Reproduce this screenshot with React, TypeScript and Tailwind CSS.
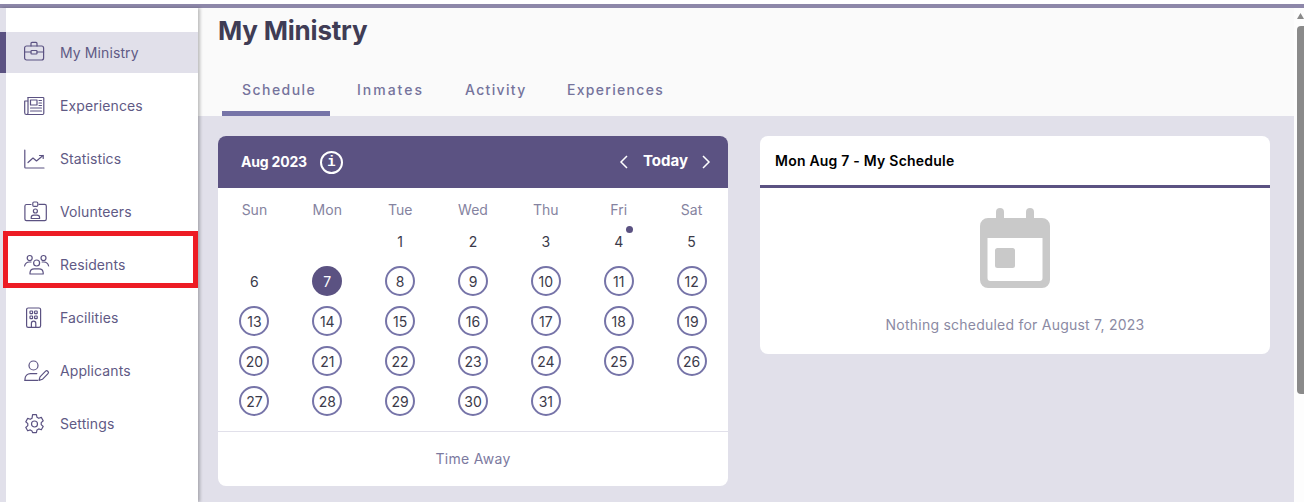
import type { ReactNode } from 'react';

const FONT = "font-['Inter','Liberation_Sans',sans-serif]";

function Icon({ children }: { children: ReactNode }) {
  return (
    <svg
      width="28"
      height="24"
      viewBox="0 0 28 24"
      fill="none"
      stroke="#5b5282"
      strokeWidth="1.2"
      strokeLinecap="round"
      strokeLinejoin="round"
    >
      {children}
    </svg>
  );
}

const navItems: { label: string; active?: boolean; icon: ReactNode }[] = [
  {
    label: 'My Ministry',
    active: true,
    icon: (
      <>
        <rect x="0.6" y="5" width="19" height="14" rx="2" />
        <path d="M7 5V2.400a1 1 0 0 1 1-1h4a1 1 0 0 1 1 1V5" />
        <path d="M0.600 11h6.400M13 11h6.600" />
        <rect x="7" y="9.500" width="6" height="3.500" rx="0.800" />
      </>
    ),
  },
  {
    label: 'Experiences',
    icon: (
      <>
        <path d="M4 3.500h15a.8.8 0 0 1 .8.8v15a1.200 1.200 0 0 1-1.200 1.200H2.500a1.800 1.800 0 0 1-1.800-1.800V7h3" />
        <path d="M4 3.500v15.500a1.500 1.500 0 0 1-1.500 1.500" />
        <rect x="6.500" y="6" width="6.500" height="5" />
        <path d="M15 6.500h2.500M15 9h2.500M15 11.500h2.500M6.500 14h11M6.500 17h11" />
      </>
    ),
  },
  {
    label: 'Statistics',
    icon: (
      <>
        <path d="M0.800 3v17.200a.8.8 0 0 0 .8.8H20" />
        <path d="M4 15.500l5-4.500 3.500 3 6.500-5.500" />
        <path d="M15.500 8.500h3.700v3" />
      </>
    ),
  },
  {
    label: 'Volunteers',
    icon: (
      <>
        <path d="M7 4.500H2.500A1.600 1.600 0 0 0 .9 6v13a1.600 1.600 0 0 0 1.600 1.600h18.200a1.600 1.600 0 0 0 1.600-1.600V6a1.600 1.600 0 0 0-1.600-1.600H15" />
        <rect x="8.800" y="2" width="5" height="4.400" rx="1.200" />
        <circle cx="11.400" cy="11" r="2" />
        <path d="M7.200 18.500v-.8a2.600 2.600 0 0 1 2.600-2.600h3.200a2.600 2.600 0 0 1 2.600 2.600v.8z" />
      </>
    ),
  },
  {
    label: 'Residents',
    icon: (
      <>
        <circle cx="5.700" cy="5" r="2.500" />
        <circle cx="19.500" cy="5" r="2.500" />
        <circle cx="12.600" cy="10" r="3" />
        <path d="M.6 13a5 5 0 0 1 4.800-4h1.600" />
        <path d="M24.600 13a5 5 0 0 0-4.800-4h-1.600" />
        <path d="M6 21v-1.300a4.200 4.200 0 0 1 4.200-3.900h4.800a4.200 4.200 0 0 1 4.200 3.900V21z" />
      </>
    ),
  },
  {
    label: 'Facilities',
    icon: (
      <>
        <rect x="2.600" y="2" width="14" height="19.400" rx="1.600" />
        <rect x="6" y="5" width="2.600" height="2.600" rx="0.600" />
        <rect x="10.600" y="5" width="2.600" height="2.600" rx="0.600" />
        <rect x="6" y="10" width="2.600" height="2.600" rx="0.600" />
        <rect x="10.600" y="10" width="2.600" height="2.600" rx="0.600" />
        <path d="M7.400 21.400v-4a2.200 2.200 0 0 1 4.400 0v4" />
      </>
    ),
  },
  {
    label: 'Applicants',
    icon: (
      <>
        <circle cx="9.500" cy="6.500" r="4.500" />
        <path d="M1 21.400v-1.400a5.400 5.400 0 0 1 5.400-5.400h6.400" />
        <path d="M1 21.400h12.600" />
        <path d="M15 21.400l1-3.600 5.600-5.600a1.500 1.500 0 0 1 2.100 0l.3.300a1.500 1.500 0 0 1 0 2.100l-5.600 5.700z" />
      </>
    ),
  },
  {
    label: 'Settings',
    icon: (
      <>
        <circle cx="10.500" cy="12" r="3" />
        <path d="M8.600 2.600h3.800l.6 2.700 1.700 1 2.600-.9 1.900 3.300-2 1.900v2l2 1.900-1.900 3.300-2.600-.9-1.700 1-.6 2.700H8.600L8 18.900l-1.700-1-2.600.9-1.900-3.300 2-1.900v-2l-2-1.900 1.900-3.300 2.600.9 1.700-1z" />
      </>
    ),
  },
];

const tabs = [
  { label: 'Schedule', box: 'mr-[7px] w-[108px] border-[#7674a8] tracking-[1.45px]' },
  { label: 'Inmates', box: 'w-[108px] border-transparent tracking-[2px]' },
  { label: 'Activity', box: 'w-[102px] border-transparent tracking-[1.35px]' },
  { label: 'Experiences', box: 'w-[120px] border-transparent tracking-[1.3px]' },
];
const weekdays = ['Sun', 'Mon', 'Tue', 'Wed', 'Thu', 'Fri', 'Sat'];

function Sidebar() {
  return (
    <aside className="relative z-10 w-[198px] shrink-0 border-l-[6px] border-[#e1e0ea] bg-white pt-[18px] shadow-[2px_0_3px_rgba(0,0,0,0.25)]">
      {navItems.map((item) => (
        <div key={item.label} className="flex h-[53px] items-center">
          <div
            className={
              item.active
                ? '-ml-[6px] flex h-[41px] w-[198px] items-center border-l-[6px] border-[#5b5282] bg-[#e1e0ea] pl-[18px]'
                : 'flex h-[41px] w-[192px] items-center pl-[18px]'
            }
          >
            <span className="flex w-[36px] shrink-0">
              <Icon>{item.icon}</Icon>
            </span>
            <span className="text-[14px] tracking-[0.1px] text-[#5f5a85]">{item.label}</span>
          </div>
        </div>
      ))}
    </aside>
  );
}

function DayCell({ day }: { day?: number }) {
  if (!day) return <div />;
  const selected = day === 7;
  const plain = day < 7;
  return (
    <div className="relative flex h-[40px] items-center justify-center">
      <span
        className={
          selected
            ? 'flex h-[30px] w-[30px] items-center justify-center rounded-full bg-[#5b5282] text-[14px] text-white'
            : plain
              ? 'flex h-[30px] w-[30px] items-center justify-center rounded-full text-[14px] text-[#3b3a4a]'
              : 'flex h-[30px] w-[30px] items-center justify-center rounded-full border-2 border-[#7674a8] text-[14px] text-[#3b3a4a]'
        }
      >
        {day}
      </span>
      {day === 4 && (
        <span className="absolute left-[44px] top-[5px] h-[7px] w-[7px] rounded-full bg-[#5b5282]" />
      )}
    </div>
  );
}

function Calendar() {
  const cells: (number | undefined)[] = [undefined, undefined];
  for (let d = 1; d <= 31; d++) cells.push(d);

  return (
    <section className="h-[350px] w-[510px] shrink-0 overflow-hidden rounded-lg bg-white">
      <div className="flex h-[52px] items-center bg-[#5b5282] pl-[23px] pr-[17px] text-white">
        <span className="pb-[2px] text-[14px] font-bold tracking-[-0.2px]">Aug 2023</span>
        <span className="ml-[13px] flex h-[23px] w-[23px] items-center justify-center rounded-full border-2 border-white font-['Liberation_Mono',monospace] text-[14px] font-bold">
          i
        </span>
        {/* hand drawn so the chevrons keep the reference's thin tall shape */}
        <svg className="ml-auto" width="10" height="14" viewBox="0 0 10 14" fill="none" stroke="white" strokeWidth="1.5">
          <path d="M8 1L2 7l6 6" />
        </svg>
        <span className="ml-[14px] mr-[13px] pb-[2px] text-[15px] font-bold">Today</span>
        <svg width="10" height="14" viewBox="0 0 10 14" fill="none" stroke="white" strokeWidth="1.5">
          <path d="M2 1l6 6-6 6" />
        </svg>
      </div>
      <div className="grid grid-cols-7 pt-[11px]">
        {weekdays.map((w) => (
          <div key={w} className="flex h-[20px] items-center justify-center text-[14px] text-[#8583a0]">
            {w}
          </div>
        ))}
      </div>
      <div className="grid grid-cols-7 pt-[2px]">
        {cells.map((day, i) => (
          <DayCell key={i} day={day} />
        ))}
      </div>
      <div className="mt-[10px] flex h-[55px] items-center justify-center border-t border-[#e1e0ea] pb-[1px] text-[14px] tracking-[0.3px] text-[#7c7a9f]">
        Time Away
      </div>
    </section>
  );
}

function SchedulePanel() {
  return (
    <section className="h-[218px] w-[510px] shrink-0 overflow-hidden rounded-lg bg-white">
      <div className="flex h-[52px] items-center border-b-[3px] border-[#5b5282] px-[15px] pb-[1px] text-[14px] font-semibold tracking-[0.22px] text-black">
        Mon Aug 7 - My Schedule
      </div>
      <div className="flex flex-col items-center pt-[20px]">
        <svg width="70" height="80" viewBox="0 0 70 80" fill="#c9c9c9">
          <rect x="16" y="0" width="8" height="18" rx="4" />
          <rect x="46" y="0" width="8" height="18" rx="4" />
          <path
            fillRule="evenodd"
            d="M8 10h54a8 8 0 0 1 8 8v54a8 8 0 0 1-8 8H8a8 8 0 0 1-8-8V18a8 8 0 0 1 8-8zM7.500 30v40a3 3 0 0 0 3 3h49a3 3 0 0 0 3-3V30z"
          />
          <rect x="15" y="40" width="20" height="20" rx="2.500" />
        </svg>
        <p className="mt-[26px] text-[14px] tracking-[0.23px] text-[#8b8aa3]">Nothing scheduled for August 7, 2023</p>
      </div>
    </section>
  );
}

function Scrollbar() {
  return (
    <div className="flex w-[10px] shrink-0 flex-col items-end bg-[#fdfdfd]">
      <svg className="mt-[5px]" width="7" height="6" viewBox="0 0 7 6" fill="#8a8a8a">
        <path d="M3.500 0L7 6H0z" />
      </svg>
      <div className="mt-[7px] h-[368px] w-[7px] rounded-l-sm bg-[#8a8a8a]" />
    </div>
  );
}

export default function App() {
  return (
    <div className={`relative flex h-[502px] w-[1304px] flex-col overflow-hidden bg-white ${FONT}`}>
      <div className="mt-[4px] h-[4px] shrink-0 bg-[#8d87a9]" />
      <div className="flex min-h-0 flex-1">
        <Sidebar />
        <main className="min-w-0 flex-1 bg-[#e1e0ea]">
          <header className="h-[108px] bg-[#fafafa] pl-[20px]">
            <h1 className="pt-[5px] text-[26px] font-bold leading-[36px] tracking-[-0.2px] text-[#3f3c55]">My Ministry</h1>
            <nav className="mt-[22px] flex pl-[4px]">
              {tabs.map((tab) => (
                <div
                  key={tab.label}
                  className={`flex h-[45px] items-center border-b-[5px] pb-[4px] pl-[20px] text-[14px] font-medium text-[#75739c] ${tab.box}`}
                >
                  {tab.label}
                </div>
              ))}
            </nav>
          </header>
          <div className="flex gap-[32px] pl-[20px] pt-[20px]">
            <Calendar />
            <SchedulePanel />
          </div>
        </main>
        <Scrollbar />
      </div>
      {/* rectangle the author of the screenshot drew over the nav */}
      <div className="pointer-events-none absolute left-[3px] top-[231px] z-20 h-[57px] w-[195px] border-[5px] border-[#ed1c24]" />
    </div>
  );
}
